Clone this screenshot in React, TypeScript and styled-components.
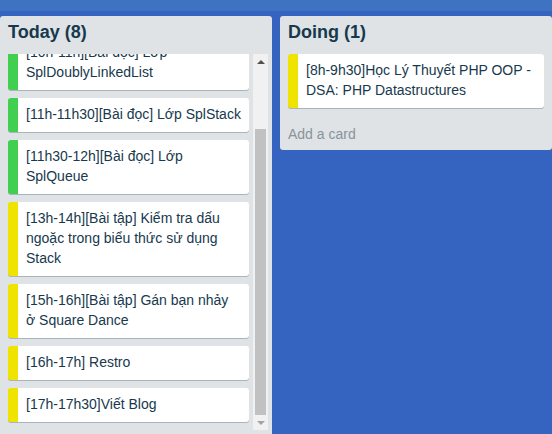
import styled, {createGlobalStyle} from 'styled-components'

const GlobalStyle = createGlobalStyle`
  html, body {
    margin: 0;
    padding: 0;
    background: #3464c0;
    overflow: hidden;
  }
  * {
    box-sizing: border-box;
  }
`

const Page = styled.div`
  width: 552px;
  height: 434px;
  overflow: hidden;
  font-family: 'Liberation Sans', Arial, sans-serif;
`

const TopBar = styled.div`
  height: 11px;
  background: #3e73c1;
`

const Board = styled.div`
  display: flex;
  align-items: flex-start;
  gap: 8px;
  padding-top: 5px;
`

const List = styled.div`
  flex: 0 0 272px;
  width: 272px;
  background: #dfe3e6;
  border-radius: 3px;
  display: flex;
  flex-direction: column;
`

const ListHeader = styled.div`
  padding: 5px 8px 11px;
`

const ListTitle = styled.h2`
  margin: 0;
  font-size: 18px;
  line-height: 22px;
  font-weight: 700;
  color: #17394d;
`

const ListBody = styled.div`
  display: flex;
  gap: 4px;
  height: 376px;
  padding: 0 4px 0 8px;
  margin-bottom: 8px;
`

const CardColumn = styled.div<{$scrolled?: boolean}>`
  flex: 1;
  min-width: 0;
  display: flex;
  flex-direction: column;
  justify-content: ${p => (p.$scrolled ? 'flex-end' : 'flex-start')};
  overflow: hidden;
`

const PlainBody = styled.div`
  padding: 0 8px;
`

const Card = styled.div<{$label: 'green' | 'yellow'}>`
  flex-shrink: 0;
  background: #fff;
  border-radius: 3px;
  border-left: 10px solid ${p => (p.$label === 'green' ? '#41cf50' : '#efe400')};
  box-shadow: 0 1px 0 rgba(9, 45, 66, 0.25);
  padding: 6px 8px 8px;
  margin-bottom: 8px;
  font-size: 14px;
  line-height: 20px;
  color: #17394d;
`

const AddCard = styled.div`
  padding: 8px 0 6px;
  font-size: 14px;
  line-height: 20px;
  color: #8a939b;
`

const Scrollbar = styled.div`
  flex: 0 0 15px;
  display: flex;
  flex-direction: column;
  background: #f1f1f1;
`

const ScrollButton = styled.div<{$dir: 'up' | 'down'}>`
  flex: 0 0 15px;
  display: flex;
  align-items: center;
  justify-content: center;

  &::after {
    content: '';
    width: 0;
    height: 0;
    border-left: 4px solid transparent;
    border-right: 4px solid transparent;
    ${p =>
      p.$dir === 'up'
        ? 'border-bottom: 4px solid #505050;'
        : 'border-top: 4px solid #a3a3a3;'}
  }
`

const ScrollTrack = styled.div`
  flex: 1;
  display: flex;
  flex-direction: column;
  justify-content: flex-end;
  padding: 0 2px;
`

const ScrollThumb = styled.div<{$size: number}>`
  height: ${p => p.$size}px;
  background: #c1c1c1;
`

type Task = {text: string; label: 'green' | 'yellow'}

const today: Task[] = [
  {text: '[9h-10h][Bài đọc] Lớp SplObjectStorage', label: 'green'},
  {text: '[10h-11h][Bài đọc] Lớp SplDoublyLinkedList', label: 'green'},
  {text: '[11h-11h30][Bài đọc] Lớp SplStack', label: 'green'},
  {text: '[11h30-12h][Bài đọc] Lớp SplQueue', label: 'green'},
  {text: '[13h-14h][Bài tập] Kiểm tra dấu ngoặc trong biểu thức sử dụng Stack', label: 'yellow'},
  {text: '[15h-16h][Bài tập] Gán bạn nhảy ở Square Dance', label: 'yellow'},
  {text: '[16h-17h] Restro', label: 'yellow'},
  {text: '[17h-17h30]Viết Blog', label: 'yellow'},
]

const doing: Task[] = [{text: '[8h-9h30]Học Lý Thuyết PHP OOP - DSA: PHP Datastructures', label: 'yellow'}]

const App = () => {
  return (
    <Page>
      <GlobalStyle />
      <TopBar />
      <Board>
        <List>
          <ListHeader>
            <ListTitle>Today ({today.length})</ListTitle>
          </ListHeader>
          <ListBody>
            <CardColumn $scrolled>
              {today.map(t => (
                <Card key={t.text} $label={t.label}>
                  {t.text}
                </Card>
              ))}
            </CardColumn>
            <Scrollbar>
              <ScrollButton $dir="up" />
              <ScrollTrack>
                <ScrollThumb $size={286} />
              </ScrollTrack>
              <ScrollButton $dir="down" />
            </Scrollbar>
          </ListBody>
        </List>
        <List>
          <ListHeader>
            <ListTitle>Doing ({doing.length})</ListTitle>
          </ListHeader>
          <PlainBody>
            {doing.map(t => (
              <Card key={t.text} $label={t.label}>
                {t.text}
              </Card>
            ))}
            <AddCard>Add a card</AddCard>
          </PlainBody>
        </List>
      </Board>
    </Page>
  )
}

export default App
